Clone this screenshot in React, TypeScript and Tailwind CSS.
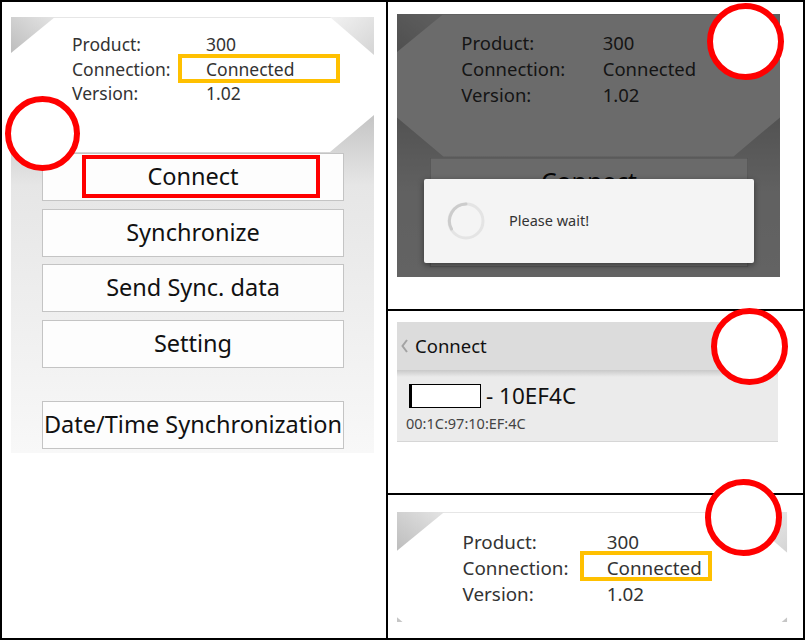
import { useId } from "react";

const font = { fontFamily: '"Noto Sans", "Open Sans", sans-serif' };

const menu = ["Connect", "Synchronize", "Send Sync. data", "Setting"];

// gray corners + lower gradient of the app's main screen
function ScreenBackdrop() {
    const id = useId().replace(/:/g, "");
    return (
        <svg className="absolute inset-0" width="363" height="436" viewBox="0 0 363 436">
            <defs>
                <linearGradient id={`tl${id}`} x1="0" y1="1" x2="1" y2="0">
                    <stop offset="0" stopColor="#bdbdbd" />
                    <stop offset="1" stopColor="#e4e4e4" />
                </linearGradient>
                <linearGradient id={`tr${id}`} x1="0" y1="0" x2="1" y2="1">
                    <stop offset="0" stopColor="#f2f2f2" />
                    <stop offset="1" stopColor="#d4d4d4" />
                </linearGradient>
                <linearGradient id={`lo${id}`} x1="0" y1="101" x2="0" y2="436" gradientUnits="userSpaceOnUse">
                    <stop offset="0" stopColor="#c6c6c6" />
                    <stop offset="0.2" stopColor="#e6e6e6" />
                    <stop offset="1" stopColor="#f8f8f8" />
                </linearGradient>
            </defs>
            <rect width="363" height="436" fill="#ffffff" />
            <line x1="0" y1="0.5" x2="363" y2="0.5" stroke="#e6e6e6" />
            <polygon points="0,0 44,0 0,36" fill={`url(#tl${id})`} />
            <polygon points="319,0 363,0 363,38" fill={`url(#tr${id})`} />
            <polygon points="0,98 44,135 319,135 363,98 363,436 0,436" fill={`url(#lo${id})`} />
        </svg>
    );
}

function InfoRows() {
    return (
        <div className="grid grid-cols-[134px_auto] text-[17.5px] leading-[24.5px] text-[#333]">
            <span>Product:</span>
            <span>300</span>
            <span>Connection:</span>
            <span>Connected</span>
            <span>Version:</span>
            <span>1.02</span>
        </div>
    );
}

function MenuButton({ label, marked, className = "" }: { label: string; marked?: boolean; className?: string }) {
    return (
        <div
            className={`relative h-[48px] flex items-center justify-center bg-[#fdfdfd] border border-[#c4c4c4] text-[23.5px] text-[#111] ${className}`}
        >
            {label}
            {marked && (
                <div className="absolute left-[39px] top-[1px] w-[238px] h-[43px] border-[4px] border-[#ff0000]" />
            )}
        </div>
    );
}

// buttons = how many menu entries are drawn (the cropped copies need fewer)
function AppScreen({ markConnect = false, buttons = 5 }: { markConnect?: boolean; buttons?: number }) {
    return (
        <div className="relative w-[363px] h-[436px] overflow-hidden" style={font}>
            <ScreenBackdrop />
            <div className="relative pt-[15px] pl-[61px]">
                <InfoRows />
            </div>
            {buttons > 0 && (
                <div className="relative mt-[47.5px] ml-[31px] w-[302px] flex flex-col gap-[7.5px]">
                    {menu.slice(0, buttons).map((m, i) => (
                        <MenuButton key={m} label={m} marked={markConnect && i === 0} />
                    ))}
                    {buttons > 4 && <MenuButton label="Date/Time Synchronization" className="mt-[25.5px]" />}
                </div>
            )}
        </div>
    );
}

function Spinner() {
    return (
        <svg width="38" height="38" viewBox="0 0 38 38">
            <circle cx="19" cy="19" r="17" fill="none" stroke="#e4e4e4" strokeWidth="3" />
            <path d="M4.5 27 A17 17 0 0 1 19 2" fill="none" stroke="#cccccc" strokeWidth="3" strokeLinecap="round" />
        </svg>
    );
}

function RingMark({ left, top, size = 77 }: { left: number; top: number; size?: number }) {
    return (
        <div
            className="absolute rounded-full bg-white border-[6px] border-[#ff0000]"
            style={{ left, top, width: size, height: size }}
        />
    );
}

export default function App() {
    return (
        <div className="relative w-[805px] h-[640px] bg-white" style={font}>
            <div className="w-full h-full border-2 border-black grid grid-cols-[386px_1fr] grid-rows-[309px_184px_1fr]">
                {/* main screen */}
                <div className="row-span-3 border-r-2 border-black pl-[9px] pt-[15px]">
                    <div className="relative w-[363px] h-[436px]">
                        <AppScreen markConnect />
                        <div className="absolute left-[167px] top-[37px] w-[162px] h-[29px] border-[4px] border-[#ffc000]" />
                    </div>
                </div>

                {/* connecting dialog */}
                <div className="border-b-2 border-black pl-[9px] pt-[12px]">
                    <div className="relative w-[383px] h-[263px] overflow-hidden">
                        <div className="origin-top-left scale-[1.055]">
                            <AppScreen buttons={2} />
                        </div>
                        <div className="absolute inset-0 bg-black/[0.58]" />
                        <div className="absolute left-[27px] top-[165px] w-[330px] h-[84px] bg-[#f4f4f4] rounded-[2px] shadow-[0_2px_6px_rgba(0,0,0,0.45)] flex items-center pl-[23px] gap-[24px]">
                            <Spinner />
                            <span className="text-[14.5px] text-[#333]">Please wait!</span>
                        </div>
                    </div>
                </div>

                {/* device list */}
                <div className="border-b-2 border-black pl-[9px] pt-[11px]">
                    <div className="w-[381px]">
                        <div className="h-[48px] bg-[#dcdcdc] flex items-center pl-[4px] gap-[7px]">
                            <svg width="7" height="14" viewBox="0 0 7 14">
                                <polyline points="6,1 1.5,7 6,13" fill="none" stroke="#a3a3a3" strokeWidth="2" />
                            </svg>
                            <span className="text-[18.5px] text-[#111]">Connect</span>
                        </div>
                        <div className="h-[72px] bg-[linear-gradient(#c9c9c9,#ebebeb_7px)] border-b border-[#d6d6d6]">
                            <div className="flex items-center pl-[12px] pt-[12px] h-[40px]">
                                <div className="w-[72px] h-[24px] bg-white border border-black border-l-[3px]" />
                                <span className="ml-[5px] text-[22.5px] leading-[26px] text-[#111]">- 10EF4C</span>
                            </div>
                            <div className="pl-[9px] mt-[4px] text-[14.5px] leading-[18px] text-[#444]">00:1C:97:10:EF:4C</div>
                        </div>
                    </div>
                </div>

                {/* connected status */}
                <div className="pl-[9px] pt-[17px]">
                    <div className="relative w-[392px] h-[110px] overflow-hidden">
                        <div className="origin-top-left scale-[1.075]">
                            <AppScreen buttons={0} />
                        </div>
                        <div className="absolute left-[183px] top-[39px] w-[132px] h-[30px] border-[4px] border-[#ffc000]" />
                    </div>
                </div>
            </div>

            <RingMark left={5} top={96} size={75} />
            <RingMark left={707} top={3} />
            <RingMark left={711} top={308} />
            <RingMark left={705} top={479} />
        </div>
    );
}
